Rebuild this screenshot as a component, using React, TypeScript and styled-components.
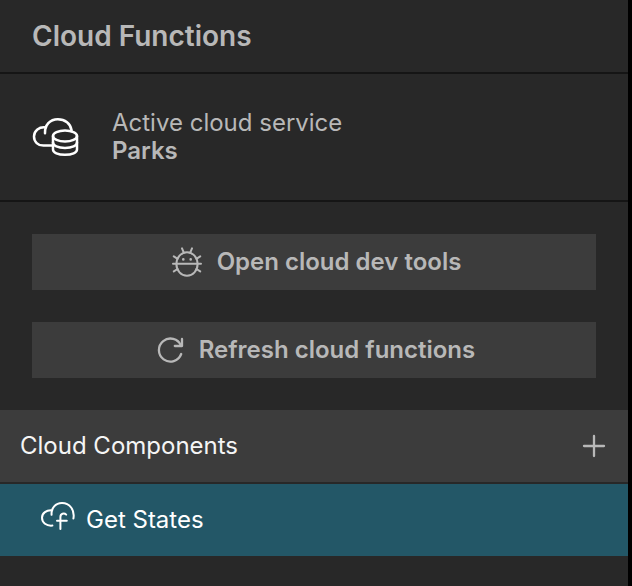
import React from "react";
import styled, { createGlobalStyle } from "styled-components";

const GlobalStyle = createGlobalStyle`
  * { box-sizing: border-box; }
  body {
    margin: 0;
    background: #282828;
    color: #b8b8b8;
    font-family: Inter, "Liberation Sans", sans-serif;
    font-size: 24px;
    line-height: 28px;
  }
  button { font: inherit; color: inherit; border: 0; cursor: pointer; }
`;

const Panel = styled.main`
  min-height: 100vh;
  background: #282828;
  border-right: 4px solid #000;
`;

const Header = styled.header`
  padding: 20px 32px;
  border-bottom: 2px solid #151515;
`;

const Title = styled.h1`
  margin: 0;
  font-size: 28px;
  line-height: 32px;
  font-weight: 600;
`;

const Service = styled.section`
  display: flex;
  align-items: center;
  gap: 32px;
  padding: 35px 32px;
  border-bottom: 2px solid #151515;
`;

const ServiceText = styled.p`
  margin: 0;
`;

const ServiceName = styled.strong`
  display: block;
  font-weight: 600;
`;

const Actions = styled.div`
  display: grid;
  gap: 32px;
  padding: 32px;
`;

const ActionButton = styled.button`
  display: flex;
  align-items: center;
  justify-content: center;
  gap: 14px;
  min-height: 56px;
  padding: 12px 12px 12px 16px;
  background: #3c3c3c;
  && { font-weight: 600; }
`;

const SectionHeader = styled.header`
  display: flex;
  align-items: center;
  justify-content: space-between;
  padding: 22px 22px 22px 20px;
  margin-bottom: 2px;
  background: #3c3c3c;
`;

const SectionTitle = styled.h2`
  margin: 0;
  font-size: 24px;
  font-weight: 400;
  color: #f5f5f5;
`;

const AddButton = styled.button`
  display: flex;
  padding: 0;
  background: none;
`;

const List = styled.ul`
  margin: 0;
  padding: 0;
  list-style: none;
`;

const ItemButton = styled.button`
  display: flex;
  align-items: center;
  gap: 10px;
  width: 100%;
  padding: 16px 40px;
  background: #235767;
  && { color: #fff; }
`;

const Icon = styled.svg<{ $tone?: string; $weight?: number }>`
  display: block;
  flex: none;
  fill: none;
  stroke: ${(p) => p.$tone ?? "currentColor"};
  stroke-width: ${(p) => p.$weight ?? 2};
  stroke-linecap: round;
  stroke-linejoin: round;
`;

const CloudDatabaseIcon = () => (
  <Icon width="48" height="42" viewBox="0 0 48 42" $tone="#fff" $weight={2.5} aria-hidden>
    <path d="M13 17.2C12.6 9 18 3.2 25.8 3.2C33 3.2 38.6 7.4 39.6 14.2" />
    <path d="M14 11.4C7 10.4 2 14.8 2 20.5C2 25.8 6 29.6 11.4 29.6H20.6" />
    <ellipse cx="33" cy="20" rx="12" ry="5.6" />
    <path d="M21 20V33.4C21 36.6 26 38.8 33 38.8S45 36.6 45 33.4V20" />
    <path d="M21 26.6C21 29.7 26 32 33 32S45 29.7 45 26.6" />
  </Icon>
);

const BugIcon = () => (
  <Icon width="32" height="32" viewBox="0 0 32 32" aria-hidden>
    <ellipse cx="16" cy="18" rx="10.6" ry="11.8" />
    <path d="M2 17.7H30M11 2.3L12.8 6.6M21 2.3L19.2 6.6M2.8 10.4L6.6 12.8M29.2 10.4L25.4 12.8M2.8 25.4L6.6 23M29.2 25.4L25.4 23" />
    <path d="M12.3 13.4h.01M19.7 13.4h.01" strokeWidth="2.6" />
  </Icon>
);

const RefreshIcon = () => (
  <Icon width="28" height="28" viewBox="0 0 28 28" $weight={2.3} aria-hidden>
    <path d="M24.2 18A11.5 11.5 0 1 1 24 9.6" />
    <path d="M25 3V10H17.8" />
  </Icon>
);

const PlusIcon = () => (
  <Icon width="24" height="24" viewBox="0 0 24 24" $weight={2.3} aria-hidden>
    <path d="M12 2V22M2 12H22" />
  </Icon>
);

const CloudFunctionIcon = () => (
  <Icon width="36" height="40" viewBox="0 0 36 40" aria-hidden>
    <path d="M11.6 14.8C11 8 15.6 3 22 3C29.6 3 35 9.8 33.4 18.6" />
    <path d="M12.2 10.4C6.4 9.8 2 13 2 17.8C2 22.6 6.4 26.2 12.4 25.6" />
    <path d="M26.2 14.6C24 12.4 20.4 13.6 20.4 17V29M17 20.8H26.8" />
  </Icon>
);

export default function App() {
  return (
    <>
      <GlobalStyle />
      <Panel>
        <Header>
          <Title>Cloud Functions</Title>
        </Header>
        <Service>
          <CloudDatabaseIcon />
          <ServiceText>
            Active cloud service
            <ServiceName>Parks</ServiceName>
          </ServiceText>
        </Service>
        <Actions>
          <ActionButton type="button">
            <BugIcon />
            Open cloud dev tools
          </ActionButton>
          <ActionButton type="button">
            <RefreshIcon />
            Refresh cloud functions
          </ActionButton>
        </Actions>
        <section>
          <SectionHeader>
            <SectionTitle>Cloud Components</SectionTitle>
            <AddButton type="button" aria-label="Add cloud component">
              <PlusIcon />
            </AddButton>
          </SectionHeader>
          <List>
            <li>
              <ItemButton type="button">
                <CloudFunctionIcon />
                Get States
              </ItemButton>
            </li>
          </List>
        </section>
      </Panel>
    </>
  );
}
